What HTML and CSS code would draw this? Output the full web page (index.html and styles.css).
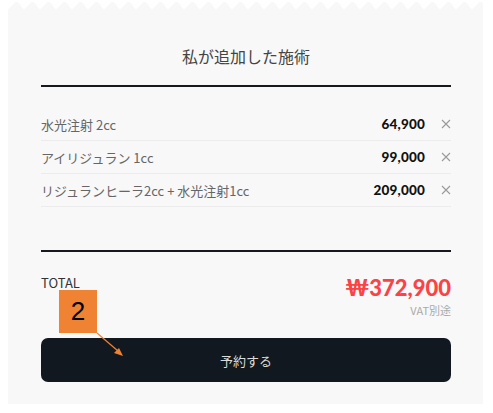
FILE: index.html
```html
<!DOCTYPE html>
<html lang="ja">
<head>
  <meta charset="UTF-8" />
  <meta name="viewport" content="width=device-width, initial-scale=1.0" />
  <title>私が追加した施術</title>
  <link rel="stylesheet" href="styles.css">
</head>
<body>
  <div class="zigzag"></div>
  <div class="card">
    <h2 class="title">私が追加した施術</h2>
    <div class="rule"></div>

    <ul class="items">
      <li class="item">
        <span class="name">水光注射 2cc</span>
        <span class="price">64,900</span>
        <button class="remove" aria-label="削除">
          <svg width="10" height="10" viewBox="0 0 10 10"><path d="M1 1L9 9M9 1L1 9" stroke="#9a9a9a" stroke-width="1.1" fill="none"/></svg>
        </button>
      </li>
      <li class="item">
        <span class="name">アイリジュラン 1cc</span>
        <span class="price">99,000</span>
        <button class="remove" aria-label="削除">
          <svg width="10" height="10" viewBox="0 0 10 10"><path d="M1 1L9 9M9 1L1 9" stroke="#9a9a9a" stroke-width="1.1" fill="none"/></svg>
        </button>
      </li>
      <li class="item">
        <span class="name">リジュランヒーラ2cc + 水光注射1cc</span>
        <span class="price">209,000</span>
        <button class="remove" aria-label="削除">
          <svg width="10" height="10" viewBox="0 0 10 10"><path d="M1 1L9 9M9 1L1 9" stroke="#9a9a9a" stroke-width="1.1" fill="none"/></svg>
        </button>
      </li>
    </ul>

    <div class="rule"></div>

    <div class="total">
      <span class="total-label">TOTAL</span>
      <div class="total-right">
        <div class="total-price">₩372,900</div>
        <div class="vat">VAT別途</div>
      </div>
    </div>

    <button class="reserve">予約する</button>
  </div>

  <div class="marker">2</div>
  <svg class="marker-arrow" width="32" height="28" viewBox="0 0 32 28">
    <line x1="1" y1="1" x2="22" y2="19" stroke="#ef8233" stroke-width="1.2"/>
    <path d="M27 24L18 21L23 16Z" fill="#ef8233"/>
  </svg>
</body>
</html>
```

FILE: styles.css
```css
body {
  margin: 0;
  padding: 1px 10px 8px 8px;
  background: #fff;
  font-family: "Noto Sans CJK JP", "Noto Sans", sans-serif;
  position: relative;
}
.zigzag {
  height: 8px;
  background: conic-gradient(from 135deg at 50% 0, #f8f8f8 90deg, transparent 0) 0 0 / 16px 8px repeat-x;
}
.card {
  background: #f8f8f8;
  padding: 0 32px 22px 33px;
}
.title {
  margin: 0;
  padding: 35px 0 17px;
  text-align: center;
  font-size: 16px;
  line-height: 24px;
  font-weight: 400;
  color: #444;
}
.rule {
  height: 2px;
  background: #16191d;
}
.items {
  list-style: none;
  margin: 21px 0 43px;
  padding: 0;
}
.item {
  display: flex;
  align-items: center;
  height: 32px;
  border-bottom: 1px solid #ececec;
  font-size: 13px;
}
.name {
  flex: 1;
  color: #666;
}
.price {
  font-family: Lato, "Noto Sans", sans-serif;
  font-weight: 900;
  color: #111;
  font-size: 13.5px;
  letter-spacing: 0.2px;
}
.remove {
  margin-left: 16px;
  width: 10px;
  height: 10px;
  padding: 0;
  border: none;
  background: none;
  display: flex;
}
.total {
  display: flex;
  justify-content: space-between;
  margin-top: 22px;
}
.total-label {
  font-size: 13px;
  line-height: 18px;
  color: #333;
}
.total-right {
  text-align: right;
}
.total-price {
  font-family: Lato, "Noto Sans", sans-serif;
  font-weight: 900;
  font-size: 22px;
  line-height: 28px;
  color: #fb4246;
}
.vat {
  font-size: 11px;
  line-height: 16px;
  color: #aaa;
}
.reserve {
  display: block;
  width: 100%;
  height: 44px;
  margin-top: 20px;
  border: none;
  border-radius: 7px;
  background: #111820;
  color: #dcdcdc;
  font-family: "Noto Sans CJK JP", sans-serif;
  font-size: 13px;
}
.marker {
  position: absolute;
  left: 59px;
  top: 290px;
  width: 38px;
  height: 43px;
  background: #ef8233;
  color: #000;
  font-family: "Liberation Sans", sans-serif;
  font-size: 26px;
  line-height: 43px;
  text-align: center;
}
.marker-arrow {
  position: absolute;
  left: 96px;
  top: 332px;
}
```
